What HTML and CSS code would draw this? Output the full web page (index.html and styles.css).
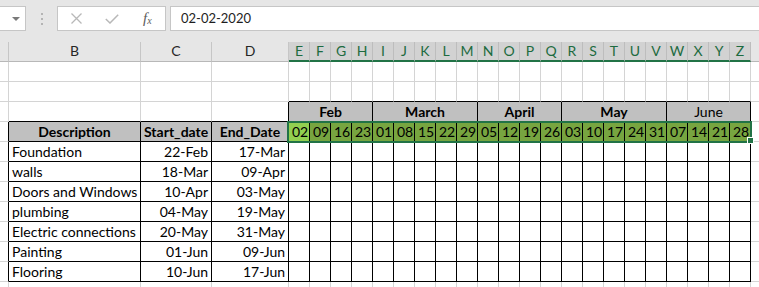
FILE: index.html
```html
<!DOCTYPE html>
<html lang="en">
<head>
    <meta charset="UTF-8">
    <meta name="viewport" content="width=device-width, initial-scale=1.0">
    <title>Project Gantt - Sheet1</title>
    <link rel="stylesheet" href="styles.css">
</head>
<body>
    <div class="formula-bar">
        <div class="name-box"><span class="drop"></span></div>
        <div class="grip"><i></i><i></i><i></i></div>
        <div class="fx-box">
            <svg class="ico-x" width="11" height="11" viewBox="0 0 11 11"><path d="M0.5 0.5 L10.5 10.5 M10.5 0.5 L0.5 10.5" stroke="#b8b8b8" stroke-width="1.3" fill="none"/></svg>
            <svg class="ico-ok" width="14" height="10" viewBox="0 0 14 10"><path d="M0.8 5 L5 9 L13.2 0.8" stroke="#b8b8b8" stroke-width="1.5" fill="none"/></svg>
            <span class="fx">f<sub>x</sub></span>
        </div>
        <div class="formula-input">02-02-2020</div>
    </div>

    <div class="col-heads">
        <div class="ch col-a"></div>
        <div class="ch col-b">B</div>
        <div class="ch col-c">C</div>
        <div class="ch col-d">D</div>
        <div class="ch sel">E</div><div class="ch sel">F</div><div class="ch sel">G</div><div class="ch sel">H</div>
        <div class="ch sel">I</div><div class="ch sel">J</div><div class="ch sel">K</div><div class="ch sel">L</div>
        <div class="ch sel">M</div><div class="ch sel">N</div><div class="ch sel">O</div><div class="ch sel">P</div>
        <div class="ch sel">Q</div><div class="ch sel">R</div><div class="ch sel">S</div><div class="ch sel">T</div>
        <div class="ch sel">U</div><div class="ch sel">V</div><div class="ch sel">W</div><div class="ch sel">X</div>
        <div class="ch sel">Y</div><div class="ch sel">Z</div>
        <div class="ch rest"></div>
    </div>

    <div class="sheet-wrap">
        <table class="sheet">
            <colgroup>
                <col class="w-a"><col class="w-b"><col class="w-c"><col class="w-d">
                <col class="w-wk"><col class="w-wk"><col class="w-wk"><col class="w-wk">
                <col class="w-wk"><col class="w-wk"><col class="w-wk"><col class="w-wk">
                <col class="w-wk"><col class="w-wk"><col class="w-wk"><col class="w-wk">
                <col class="w-wk"><col class="w-wk"><col class="w-wk"><col class="w-wk">
                <col class="w-wk"><col class="w-wk"><col class="w-wk"><col class="w-wk">
                <col class="w-wk"><col class="w-wk">
                <col class="w-rest">
            </colgroup>
            <tr>
                <td></td><td></td><td></td><td></td>
                <td></td><td></td><td></td><td></td><td></td><td></td><td></td><td></td><td></td><td></td><td></td>
                <td></td><td></td><td></td><td></td><td></td><td></td><td></td><td></td><td></td><td></td><td></td>
                <td></td>
            </tr>
            <tr class="above-months">
                <td></td><td></td><td></td><td></td>
                <td class="kb"></td><td class="kb"></td><td class="kb"></td><td class="kb"></td><td class="kb"></td><td class="kb"></td><td class="kb"></td><td class="kb"></td><td class="kb"></td><td class="kb"></td><td class="kb"></td>
                <td class="kb"></td><td class="kb"></td><td class="kb"></td><td class="kb"></td><td class="kb"></td><td class="kb"></td><td class="kb"></td><td class="kb"></td><td class="kb"></td><td class="kb"></td><td class="kb"></td>
                <td></td>
            </tr>
            <tr class="months">
                <td></td><td class="kb"></td><td class="kb"></td><td class="kb kr"></td>
                <td class="month" colspan="4">Feb</td>
                <td class="month" colspan="5">March</td>
                <td class="month" colspan="4">April</td>
                <td class="month" colspan="5">May</td>
                <td class="month plain" colspan="4">June</td>
                <td></td>
            </tr>
            <tr class="boxed">
                <td class="edge"></td>
                <td class="head">Description</td>
                <td class="head">Start_date</td>
                <td class="head">End_Date</td>
                <td class="wk active">02</td><td class="wk">09</td><td class="wk">16</td><td class="wk">23</td>
                <td class="wk">01</td><td class="wk">08</td><td class="wk">15</td><td class="wk">22</td><td class="wk">29</td>
                <td class="wk">05</td><td class="wk">12</td><td class="wk">19</td><td class="wk">26</td>
                <td class="wk">03</td><td class="wk">10</td><td class="wk">17</td><td class="wk">24</td><td class="wk">31</td>
                <td class="wk">07</td><td class="wk">14</td><td class="wk">21</td><td class="wk">28</td>
                <td class="out"></td>
            </tr>
            <tr class="boxed">
                <td class="edge"></td><td>Foundation</td><td class="num">22-Feb</td><td class="num">17-Mar</td>
                <td></td><td></td><td></td><td></td><td></td><td></td><td></td><td></td><td></td><td></td><td></td>
                <td></td><td></td><td></td><td></td><td></td><td></td><td></td><td></td><td></td><td></td><td></td>
                <td class="out"></td>
            </tr>
            <tr class="boxed">
                <td class="edge"></td><td>walls</td><td class="num">18-Mar</td><td class="num">09-Apr</td>
                <td></td><td></td><td></td><td></td><td></td><td></td><td></td><td></td><td></td><td></td><td></td>
                <td></td><td></td><td></td><td></td><td></td><td></td><td></td><td></td><td></td><td></td><td></td>
                <td class="out"></td>
            </tr>
            <tr class="boxed">
                <td class="edge"></td><td>Doors and Windows</td><td class="num">10-Apr</td><td class="num">03-May</td>
                <td></td><td></td><td></td><td></td><td></td><td></td><td></td><td></td><td></td><td></td><td></td>
                <td></td><td></td><td></td><td></td><td></td><td></td><td></td><td></td><td></td><td></td><td></td>
                <td class="out"></td>
            </tr>
            <tr class="boxed">
                <td class="edge"></td><td>plumbing</td><td class="num">04-May</td><td class="num">19-May</td>
                <td></td><td></td><td></td><td></td><td></td><td></td><td></td><td></td><td></td><td></td><td></td>
                <td></td><td></td><td></td><td></td><td></td><td></td><td></td><td></td><td></td><td></td><td></td>
                <td class="out"></td>
            </tr>
            <tr class="boxed">
                <td class="edge"></td><td>Electric connections</td><td class="num">20-May</td><td class="num">31-May</td>
                <td></td><td></td><td></td><td></td><td></td><td></td><td></td><td></td><td></td><td></td><td></td>
                <td></td><td></td><td></td><td></td><td></td><td></td><td></td><td></td><td></td><td></td><td></td>
                <td class="out"></td>
            </tr>
            <tr class="boxed">
                <td class="edge"></td><td>Painting</td><td class="num">01-Jun</td><td class="num">09-Jun</td>
                <td></td><td></td><td></td><td></td><td></td><td></td><td></td><td></td><td></td><td></td><td></td>
                <td></td><td></td><td></td><td></td><td></td><td></td><td></td><td></td><td></td><td></td><td></td>
                <td class="out"></td>
            </tr>
            <tr class="boxed">
                <td class="edge"></td><td>Flooring</td><td class="num">10-Jun</td><td class="num">17-Jun</td>
                <td></td><td></td><td></td><td></td><td></td><td></td><td></td><td></td><td></td><td></td><td></td>
                <td></td><td></td><td></td><td></td><td></td><td></td><td></td><td></td><td></td><td></td><td></td>
                <td class="out"></td>
            </tr>
            <tr>
                <td></td><td></td><td></td><td></td>
                <td></td><td></td><td></td><td></td><td></td><td></td><td></td><td></td><td></td><td></td><td></td>
                <td></td><td></td><td></td><td></td><td></td><td></td><td></td><td></td><td></td><td></td><td></td>
                <td></td>
            </tr>
        </table>

        <!-- selection outline over E4:Z4 -->
        <div class="selection"></div>
        <div class="fill-handle"></div>
    </div>
</body>
</html>
```

FILE: styles.css
```css
/* Spreadsheet colours */
:root {
    --chrome: #e6e6e6;
    --chrome-line: #c6c6c6;
    --grid: #d4d4d4;
    --ink: #000000;
    --excel-green: #217346;
    --header-gray: #c0c0c0;
    --week-green: #77a540;
    --active-green: #92d050;
    --cell-font: 'Lato', 'Liberation Sans', sans-serif;
}

* {
    box-sizing: border-box;
    margin: 0;
    padding: 0;
}

body {
    width: 759px;
    height: 287px;
    overflow: hidden;
    background: #ffffff;
    font-family: var(--cell-font);
    color: var(--ink);
}

/* Formula bar strip */
.formula-bar {
    height: 42px;
    background: var(--chrome);
    display: flex;
    align-items: flex-start;
    padding-top: 6px;
}

.name-box {
    width: 26px;
    height: 25px;
    background: #ffffff;
    border: 1px solid var(--chrome-line);
    border-left: none;
    position: relative;
}

.drop {
    position: absolute;
    left: 12px;
    top: 10px;
    border-left: 4px solid transparent;
    border-right: 4px solid transparent;
    border-top: 4px solid #7a7a7a;
}

.grip {
    width: 31px;
    height: 25px;
    display: flex;
    flex-direction: column;
    align-items: center;
    justify-content: center;
    gap: 3px;
}

.grip i {
    display: block;
    width: 2px;
    height: 2px;
    background: #b4b4b4;
}

.fx-box {
    width: 109px;
    height: 25px;
    background: #ffffff;
    border: 1px solid var(--chrome-line);
    display: flex;
    align-items: center;
    padding-left: 13px;
}

.ico-x {
    margin-right: 23px;
}

.ico-ok {
    margin-top: 1px;
    margin-right: 24px;
}

.fx {
    font-family: 'Liberation Serif', serif;
    font-style: italic;
    font-size: 15px;
    color: #5c5c5c;
    line-height: 1;
}

.fx sub {
    font-size: 10px;
    vertical-align: baseline;
    position: relative;
    top: 1px;
}

.formula-input {
    flex: 1;
    height: 25px;
    margin-left: 4px;
    background: #ffffff;
    border: 1px solid var(--chrome-line);
    border-right: none;
    padding-left: 10px;
    font-size: 13px;
    line-height: 23px;
    color: #1e1e1e;
}

/* Column letters */
.col-heads {
    display: flex;
    height: 20px;
    background: var(--chrome);
}

.ch {
    flex: none;
    height: 20px;
    border-right: 1px solid var(--chrome-line);
    border-bottom: 1px solid #b8b8b8;
    text-align: center;
    font-size: 14px;
    line-height: 18px;
    color: #262626;
}

.col-a { width: 9px; }
.col-b { width: 132px; }
.col-c { width: 71px; }
.col-d { width: 77px; }

.ch.sel {
    width: 21px;
    background: #d2d2d2;
    color: #1d6b40;
    border-right-color: #bdbdbd;
    border-bottom: 2px solid var(--excel-green);
}

.ch.rest {
    flex: 1;
    border-right: none;
}

/* Grid */
.sheet-wrap {
    position: relative;
}

.sheet {
    table-layout: fixed;
    border-collapse: separate;
    border-spacing: 0;
    width: 781px;
}

.w-a { width: 9px; }
.w-b { width: 132px; }
.w-c { width: 71px; }
.w-d { width: 77px; }
.w-wk { width: 21px; }
.w-rest { width: 30px; }

.sheet tr { height: 20px; }

.sheet td {
    height: 20px;
    padding: 0 3px;
    border-right: 1px solid var(--grid);
    border-bottom: 1px solid var(--grid);
    font-size: 14px;
    line-height: 19px;
    white-space: nowrap;
    overflow: hidden;
    vertical-align: bottom;
}

.sheet td.kb { border-bottom-color: var(--ink); }
.sheet td.kr { border-right-color: var(--ink); }

.month {
    background: var(--header-gray);
    border-right-color: var(--ink) !important;
    border-bottom-color: var(--ink) !important;
    text-align: center;
    font-weight: 700;
}

.month.plain { font-weight: 400; }

/* Rows inside the black table frame */
.boxed td {
    border-right-color: var(--ink);
    border-bottom-color: var(--ink);
}

.boxed td.edge { border-bottom-color: var(--grid); }
.boxed td.out {
    border-right-color: var(--grid);
    border-bottom-color: var(--grid);
}

.head {
    background: var(--header-gray);
    font-weight: 700;
    text-align: center;
}

.num { text-align: right; }

.wk {
    background: var(--week-green);
    text-align: center;
    padding: 0 0 0 2px !important;
}

.wk.active { background: var(--active-green); }

.selection {
    position: absolute;
    left: 287px;
    top: 59px;
    width: 465px;
    height: 22px;
    border: 2px solid var(--excel-green);
    pointer-events: none;
}

.fill-handle {
    position: absolute;
    left: 747px;
    top: 75px;
    width: 7px;
    height: 7px;
    background: var(--excel-green);
    border: 1px solid #ffffff;
}
```
